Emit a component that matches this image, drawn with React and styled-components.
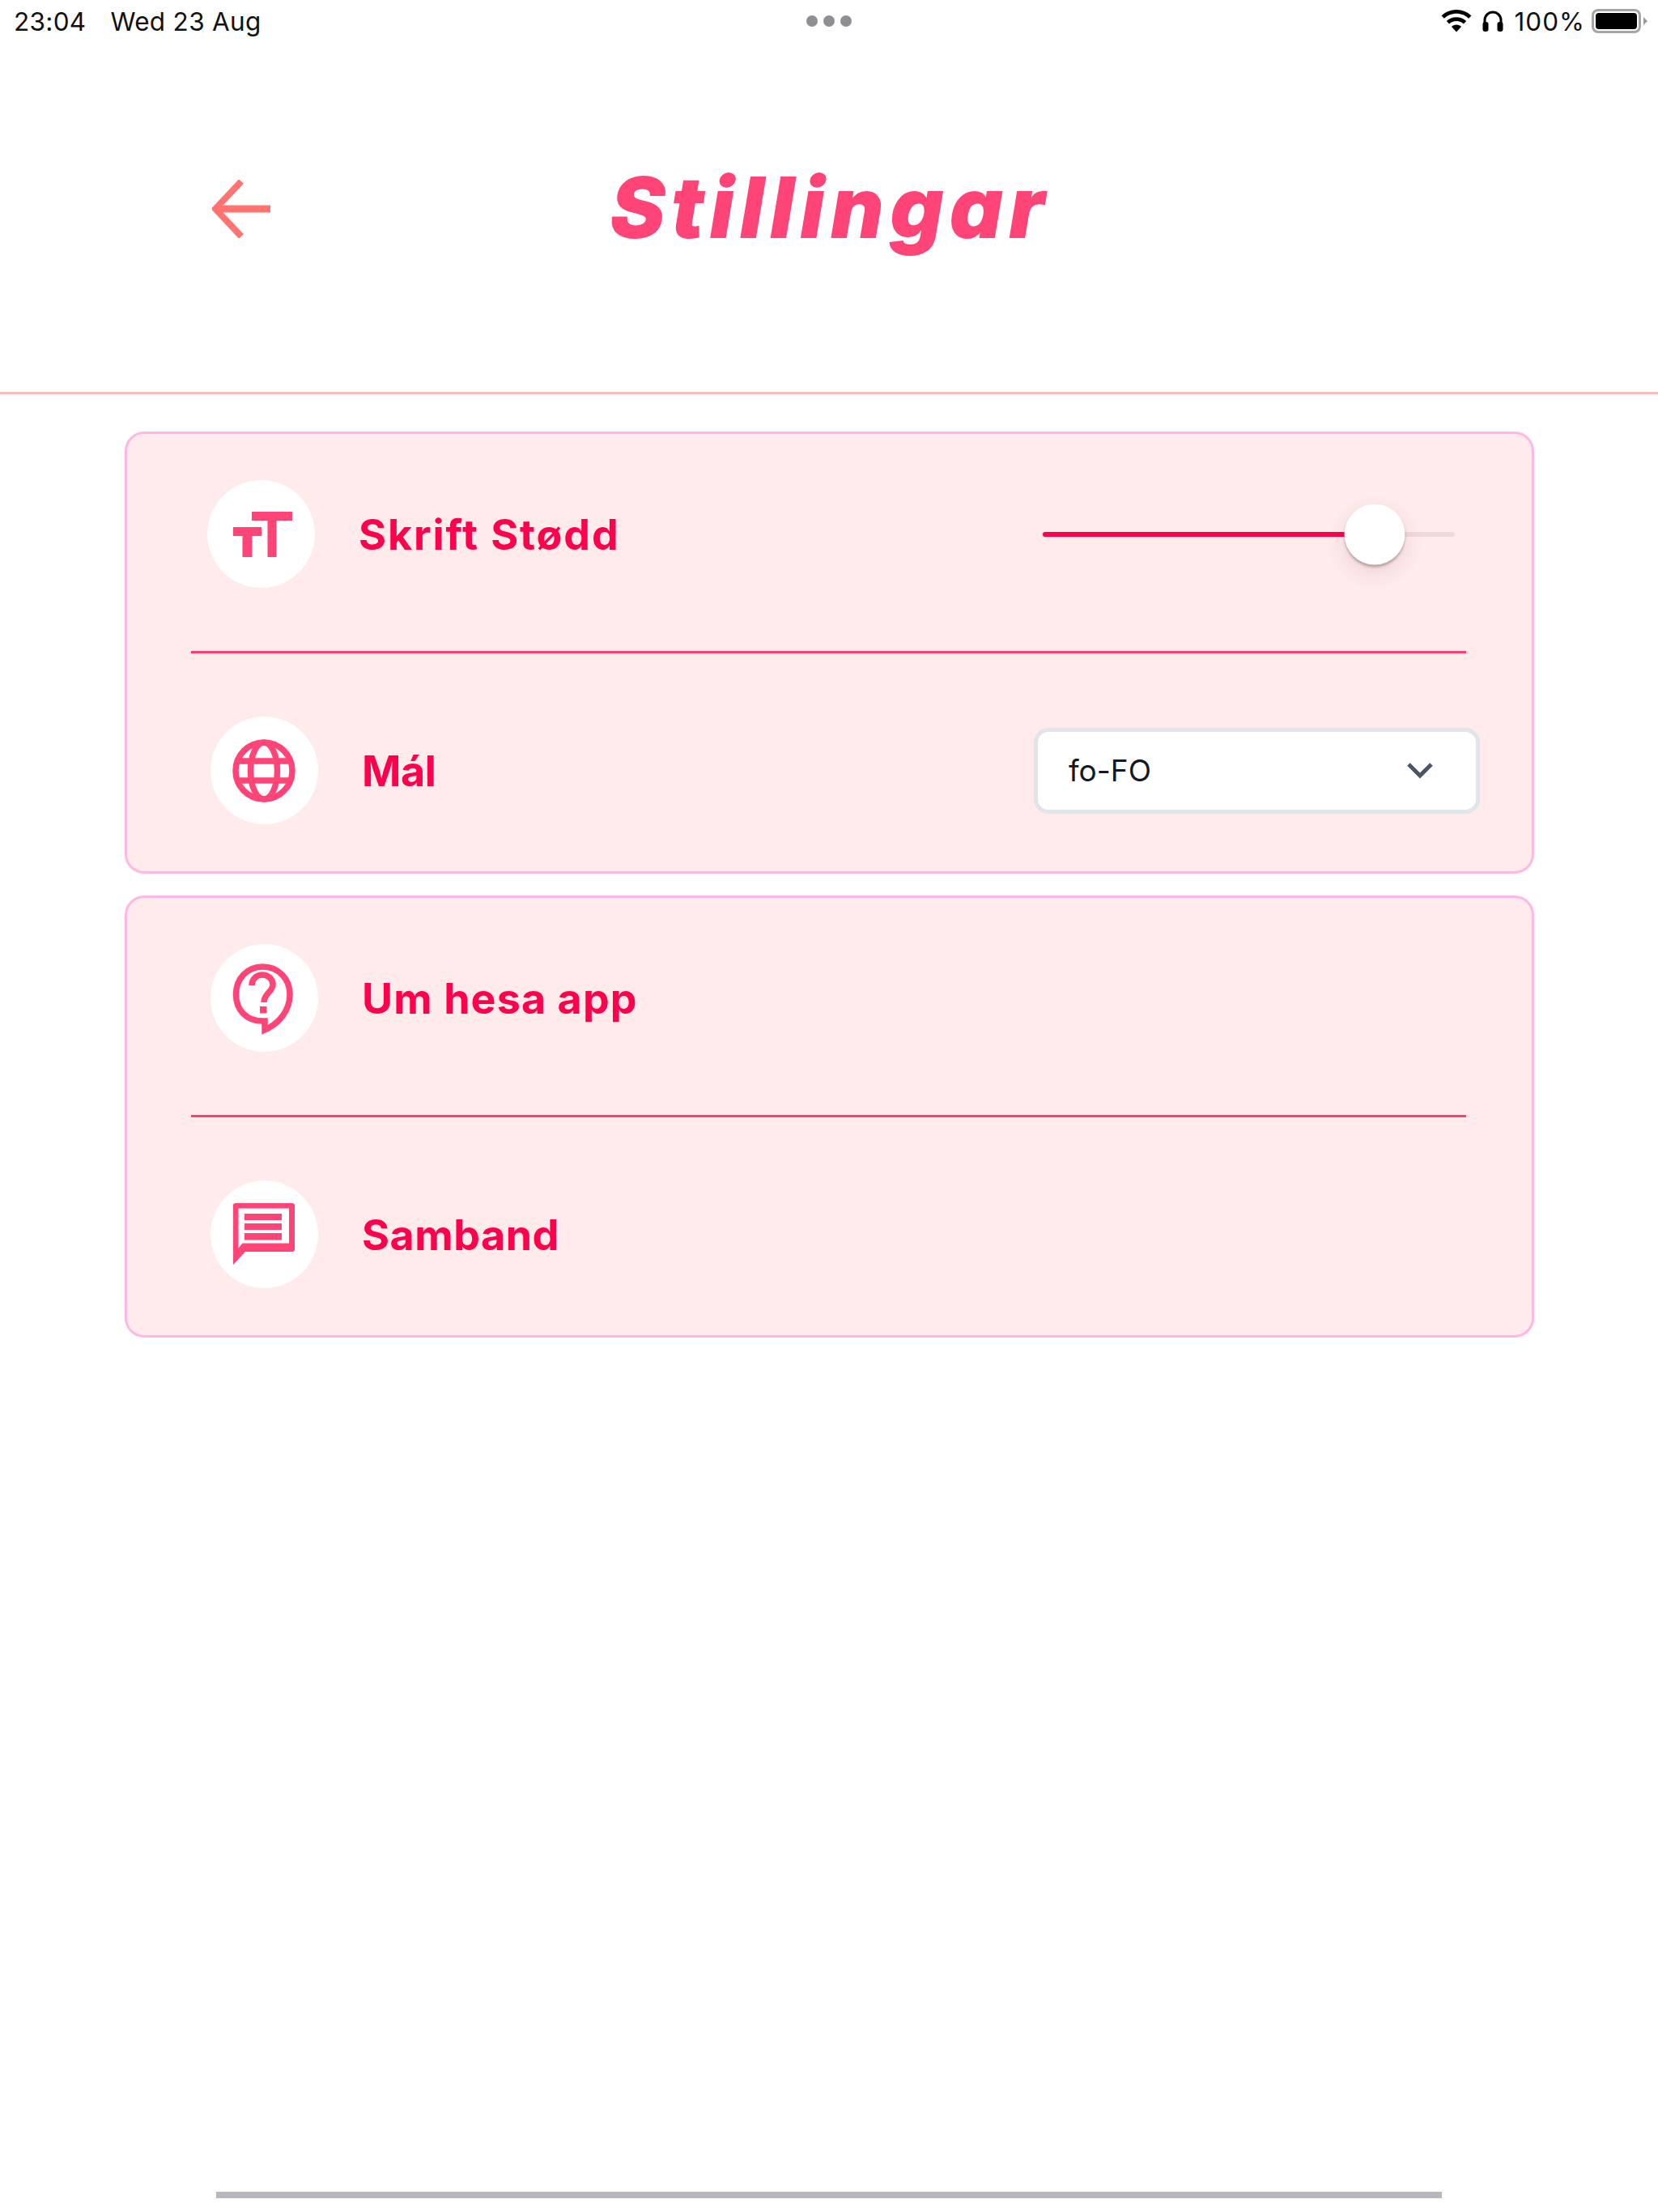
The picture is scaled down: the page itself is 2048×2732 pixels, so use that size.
import React from "react";
import styled, { createGlobalStyle } from "styled-components";

const Global = createGlobalStyle`
  html, body { margin: 0; padding: 0; background: #fff; }
  * { box-sizing: border-box; }
`;
const Page = styled.div`
  width: 2048px; height: 2732px; display: flex; flex-direction: column; background: #fff; overflow: hidden;
`;
const StatusBar = styled.div`
  height: 52px; display: grid; grid-template-columns: 1fr auto 1fr; align-items: center;
  padding: 0 13px; font-family: Inter, "Liberation Sans", sans-serif; font-size: 31.5px; color: #111;
`;
const StatusLeft = styled.div`display: flex; gap: 30px; padding-left: 4px; letter-spacing: 0.3px;`;
const Dots = styled.div`display: flex; gap: 7px;`;
const Dot = styled.span`width: 14px; height: 14px; border-radius: 50%; background: #8f8f93;`;
const StatusRight = styled.div`display: flex; align-items: center; justify-content: flex-end;`;
const Percent = styled.span`margin: 0 8px 0 14px; letter-spacing: 1px;`;
const Battery = styled.div`
  width: 61px; height: 30px; border: 3px solid #a5a5a5; border-radius: 8px; padding: 2px; 
`;
const BatteryFill = styled.div`width: 100%; height: 100%; background: #000; border-radius: 4px;`;
const BatteryNub = styled.div`
  width: 0; height: 0; margin-left: 3px; border-left: 5px solid #999;
  border-top: 5px solid transparent; border-bottom: 5px solid transparent;
`;
const Header = styled.header`
  height: 435px; padding: 150px 0 0 263px; border-bottom: 3px solid #ffb8bd;
  display: grid; grid-template-columns: 70px 1fr 333px; align-items: center; align-content: start;
`;
const BackIcon = styled.svg`width: 72px; height: 72px; display: block; margin-left: -1px;`;
const Title = styled.h1`
  margin: 0; height: 112px; line-height: 108px; text-align: center; padding-left: 4px;
  font-family: Inter, sans-serif; font-weight: 800; font-style: italic; font-size: 102px; letter-spacing: 8.4px;
  color: #ff4477; -webkit-text-stroke: 2px #ff4477;
`;
const Main = styled.main`
  width: 1741px; margin: 46px 0 0 154px; display: flex; flex-direction: column; gap: 27px;
`;
const Card = styled.section`
  background: #ffebec; border: 3px solid #ffb8e3; border-radius: 24px; padding: 57px 0 58px;
`;
const Row = styled.div`
  display: flex; align-items: center; height: 133px; padding-left: ${p => p.$inset}px; padding-right: ${p => p.$right || 64}px;
`;
const IconCircle = styled.div`
  width: 133px; height: 133px; flex: none; border-radius: 50%; background: #fff;
  display: flex; align-items: center; justify-content: center;
`;
const Glyph = styled.svg`width: 90px; height: 90px; display: block; color: #ff4477;`;
const Label = styled.span`
  margin-left: 54px; padding-top: 2px; flex: 1; font-family: Inter, sans-serif; font-weight: 700; font-size: 52px;
  letter-spacing: ${p => p.$track}px; color: #ff004d;
`;
const Divider = styled.hr`
  border: 0; height: 3px; background: #ff3f74; margin: ${p => p.$top}px 81px ${p => p.$bottom}px 79px;
`;
const Slider = styled.div`
  position: relative; width: 509px; height: 6px; background: #eed9dc; border-radius: 3px;
`;
const SliderFill = styled.div`
  height: 100%; width: ${p => p.$value}px; background: #ff004d; border-radius: 3px;
`;
const SliderThumb = styled.div`
  position: absolute; top: 50%; left: ${p => p.$value}px; width: 75px; height: 75px; transform: translate(-50%, -50%);
  border-radius: 50%; background: #fff; box-shadow: 0 3px 3px rgba(90,60,60,.35), 0 10px 24px rgba(120,70,70,.14);
`;
const Select = styled.div`
  width: 551px; height: 106px; flex: none; background: #fff; border: 5px solid #e1e4e8; border-radius: 18px;
  display: flex; align-items: center; justify-content: space-between; padding: 0 52px 0 38px;
  font-family: Inter, "Liberation Sans", sans-serif; font-size: 37px; color: #111827;
`;
const Chevron = styled.svg`width: 34px; height: 22px; display: block;`;
const HomeBar = styled.div`
  width: 1514px; height: 8px; margin: auto 0 17px 267px; background: #b8b8bc;
`;

const Wifi = () => (
  <svg width="38" height="28" viewBox="0 0 38 28" fill="#000">
    <path d="M19 0C11.8 0 5.4 2.8.6 7.4l3.3 3.4C7.8 7.100 13.100 4.800 19 4.800s11.200 2.300 15.100 6l3.300-3.400C32.600 2.800 26.200 0 19 0z" />
    <path d="M19 9.300c-4.700 0-9 1.800-12.200 4.800l3.300 3.400c2.300-2.100 5.400-3.400 8.900-3.400s6.600 1.300 8.900 3.400l3.300-3.400C28 11.100 23.700 9.300 19 9.300z" />
    <path d="M19 18.600c-2.300 0-4.400.9-6 2.300l6 6.600 6-6.600c-1.600-1.400-3.700-2.300-6-2.300z" />
  </svg>
);
const Phones = () => (
  <svg width="26" height="28" viewBox="0 0 26 28" style={{ marginLeft: 13 }}>
    <path d="M3 18V13a10 10 0 0 1 20 0v5" fill="none" stroke="#000" strokeWidth="3" />
    <rect x="0.500" y="15" width="7" height="12" rx="3" fill="#000" />
    <rect x="18.500" y="15" width="7" height="12" rx="3" fill="#000" />
  </svg>
);
const Arrow = () => (
  <BackIcon viewBox="0 0 72 72" fill="none" stroke="#ff7470">
    <path d="M72 36H6" strokeWidth="9" />
    <path d="M36 2L4 36l32 34" strokeWidth="8" />
  </BackIcon>
);
const TextSize = () => (
  <Glyph viewBox="0 0 90 90" fill="currentColor">
    <rect x="33" y="17" width="50" height="11" /><rect x="52.500" y="17" width="11" height="56" />
    <rect x="10" y="36" width="35" height="11" /><rect x="21.500" y="36" width="12" height="37" />
  </Glyph>
);
const Globe = () => (
  <Glyph viewBox="0 0 90 90" fill="none" stroke="currentColor" strokeWidth="7.500">
    <circle cx="44" cy="45" r="35" />
    <ellipse cx="44" cy="45" rx="16.500" ry="35" />
    <path d="M9 33h70M9 57h70" />
  </Glyph>
);
const Question = () => (
  <Glyph viewBox="0 0 90 90" fill="none" stroke="currentColor">
    <path d="M42 73C22 73 9.500 59 9.500 40S23 6 42.500 6 76 21 76 40c0 20-13 36-31 44V73z" strokeWidth="7.500" />
    <path d="M29 29c0-8 6-13 13-13s13 5 13 12c0 9-11 11-11 22" strokeWidth="7.500" />
    <rect x="39" y="55" width="8.500" height="8.500" fill="currentColor" stroke="none" />
  </Glyph>
);
const Chat = () => (
  <Glyph viewBox="0 0 90 90" fill="currentColor">
    <path fillRule="evenodd" d="M9 6h70a3 3 0 0 1 3 3v54a3 3 0 0 1-3 3H21L6 82V9a3 3 0 0 1 3-3zm3.500 6.500v49l5-6h57.500v-43z" />
    <rect x="20" y="19" width="46" height="8" /><rect x="20" y="31" width="46" height="8" /><rect x="20" y="43" width="46" height="8.500" />
  </Glyph>
);

export default function App() {
  return (
    <Page>
      <Global />
      <StatusBar>
        <StatusLeft><span>23:04</span><span>Wed 23 Aug</span></StatusLeft>
        <Dots><Dot /><Dot /><Dot /></Dots>
        <StatusRight>
          <Wifi /><Phones /><Percent>100%</Percent>
          <Battery><BatteryFill /></Battery><BatteryNub />
        </StatusRight>
      </StatusBar>
      <Header>
        <Arrow />
        <Title>Stillingar</Title>
      </Header>
      <Main>
        <Card>
          <Row $inset={99} $right={95}>
            <IconCircle><TextSize /></IconCircle>
            <Label $track={1.9}>Skrift Stødd</Label>
            <Slider><SliderFill $value={375} /><SliderThumb $value={410} /></Slider>
          </Row>
          <Divider $top={78} $bottom={78} />
          <Row $inset={103}>
            <IconCircle><Globe /></IconCircle>
            <Label $track={-0.4}>Mál</Label>
            <Select>
              fo-FO
              <Chevron viewBox="0 0 34 22" fill="none" stroke="#4b5563" strokeWidth="5"><path d="M3 3l14 14L31 3" /></Chevron>
            </Select>
          </Row>
        </Card>
        <Card>
          <Row $inset={103}>
            <IconCircle><Question /></IconCircle>
            <Label $track={1.1}>Um hesa app</Label>
          </Row>
          <Divider $top={78} $bottom={78} />
          <Row $inset={103}>
            <IconCircle><Chat /></IconCircle>
            <Label $track={0.5}>Samband</Label>
          </Row>
        </Card>
      </Main>
      <HomeBar />
    </Page>
  );
}
